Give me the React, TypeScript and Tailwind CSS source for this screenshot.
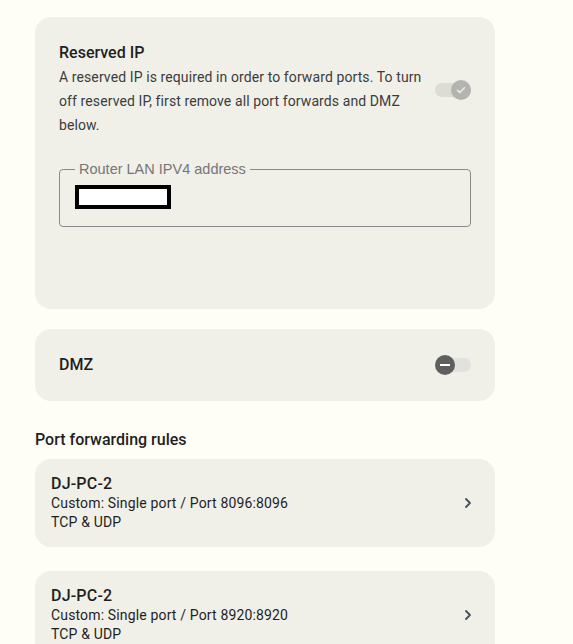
import { ChevronRight } from "lucide-react";

type Rule = {
    name: string;
    detail: string;
    protocol: string;
};

const rules: Rule[] = [
    { name: "DJ-PC-2", detail: "Custom: Single port / Port 8096:8096", protocol: "TCP & UDP" },
    { name: "DJ-PC-2", detail: "Custom: Single port / Port 8920:8920", protocol: "TCP & UDP" },
];

function ToggleOn() {
    return (
        <div className="relative h-[14px] w-[36px] rounded-full bg-[#dcdcd5]">
            <div className="absolute -top-[3px] right-0 flex h-[20px] w-[20px] items-center justify-center rounded-full bg-[#b3b3b0]">
                <svg width="12" height="12" viewBox="0 0 24 24" fill="none" stroke="#eeeeea" strokeWidth="3" strokeLinecap="round" strokeLinejoin="round">
                    <path d="M5 12.5l4.5 4.5L19 7.5" />
                </svg>
            </div>
        </div>
    );
}

function ToggleOff() {
    return (
        <div className="relative h-[14px] w-[36px] rounded-full bg-[#e1e1dd]">
            <div className="absolute -top-[3px] left-0 flex h-[20px] w-[20px] items-center justify-center rounded-full bg-[#5f5f5f]">
                <div className="h-[2px] w-[10px] bg-white" />
            </div>
        </div>
    );
}

export default function App() {
    return (
        <div className="min-h-[644px] bg-[#fefef6] pl-[35px] pt-[17px] text-[#1f1f1f] font-['Roboto',sans-serif]">
            <div className="w-[460px]">
                <div className="h-[292px] rounded-[16px] bg-[#f0f0e9] px-[24px] pt-[26px]">
                    <div className="flex items-center justify-between">
                        <div className="w-[372px]">
                            <h2 className="text-[16px] font-medium leading-[20px]">Reserved IP</h2>
                            <p className="mt-[2px] text-[14px] leading-[24px] tracking-[0.1px] text-[#3c3c3c]">
                                A reserved IP is required in order to forward ports. To turn off reserved IP, first remove all port forwards and DMZ below.
                            </p>
                        </div>
                        <ToggleOn />
                    </div>
                    <fieldset className="mt-[24px] h-[66px] rounded-[4px] border border-[#8a8a8a] px-[15px] pt-[8px]">
                        <legend className="px-[4px] text-[14.5px] leading-[16px] text-[#767676] font-['Liberation_Sans',sans-serif]">Router LAN IPV4 address</legend>
                        <div className="h-[24px] w-[96px] border-[4px] border-black bg-white" />
                    </fieldset>
                </div>

                <div className="mt-[20px] flex h-[72px] items-center justify-between rounded-[16px] bg-[#f0f0e9] px-[24px]">
                    <span className="text-[16px] font-medium">DMZ</span>
                    <ToggleOff />
                </div>

                <h3 className="mt-[29px] text-[16px] font-medium leading-[20px]">Port forwarding rules</h3>

                <div className="mt-[9px] flex flex-col gap-[24px]">
                    {rules.map((rule, i) => (
                        <div key={i} className="flex h-[88px] items-center justify-between rounded-[16px] bg-[#f0f0e9] pl-[16px] pr-[19px]">
                            <div>
                                <div className="text-[16px] font-medium leading-[20px] tracking-[0.2px]">{rule.name}</div>
                                <div className="text-[14px] leading-[19px] tracking-[0.15px]">{rule.detail}</div>
                                <div className="text-[14px] leading-[19px] tracking-[0.15px]">{rule.protocol}</div>
                            </div>
                            <ChevronRight size={16} strokeWidth={2.75} className="text-[#48505e]" />
                        </div>
                    ))}
                </div>
            </div>
        </div>
    );
}
